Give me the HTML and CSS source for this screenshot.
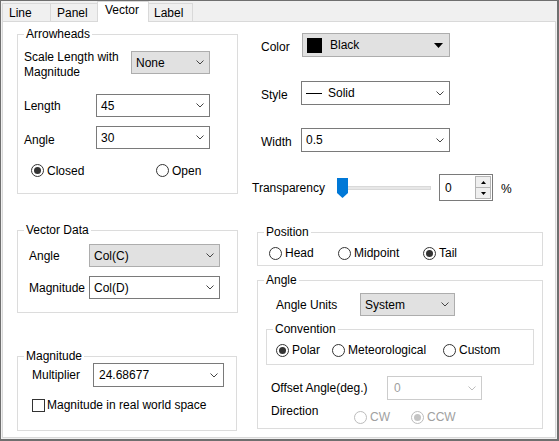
FILE: index.html
```html
<!DOCTYPE html>
<html>
<head>
<meta charset="utf-8">
<link rel="stylesheet" href="styles.css">
</head>
<body>
<div class="window">
  <div class="tabs">
    <div class="tab t-line">Line</div>
    <div class="tab t-panel">Panel</div>
    <div class="tab t-vector active">Vector</div>
    <div class="tab t-label">Label</div>
  </div>
  <div class="panel">
    <div class="col-left">
      <div class="group g-arrow">
        <div class="gtitle">Arrowheads</div>
        <div class="row r-scale">
          <div class="lbl lbl-scale">Scale Length with<br>Magnitude</div>
          <div class="select gray s-none"><span class="val">None</span><svg class="chev" width="8" height="5" viewBox="0 0 8 5"><path d="M0.5 0.5 L4 4 L7.5 0.5" fill="none" stroke="#444" stroke-width="1"/></svg></div>
        </div>
        <div class="row r-len">
          <div class="lbl lbl-len">Length</div>
          <div class="select s-len"><span class="val">45</span><svg class="chev" width="8" height="5" viewBox="0 0 8 5"><path d="M0.5 0.5 L4 4 L7.5 0.5" fill="none" stroke="#444" stroke-width="1"/></svg></div>
        </div>
        <div class="row r-ang">
          <div class="lbl lbl-len lbl-low">Angle</div>
          <div class="select s-len"><span class="val">30</span><svg class="chev" width="8" height="5" viewBox="0 0 8 5"><path d="M0.5 0.5 L4 4 L7.5 0.5" fill="none" stroke="#444" stroke-width="1"/></svg></div>
        </div>
        <div class="row r-radio-arrow">
          <div class="radio w-closed"><span class="rc checked"></span>Closed</div>
          <div class="radio"><span class="rc"></span>Open</div>
        </div>
      </div>

      <div class="group g-vec">
        <div class="gtitle">Vector Data</div>
        <div class="row r-vec1">
          <div class="lbl lbl-vec">Angle</div>
          <div class="select gray s-vec"><span class="val">Col(C)</span><svg class="chev" width="8" height="5" viewBox="0 0 8 5"><path d="M0.5 0.5 L4 4 L7.5 0.5" fill="none" stroke="#444" stroke-width="1"/></svg></div>
        </div>
        <div class="row r-vec2">
          <div class="lbl lbl-vec">Magnitude</div>
          <div class="select s-vec"><span class="val">Col(D)</span><svg class="chev" width="8" height="5" viewBox="0 0 8 5"><path d="M0.5 0.5 L4 4 L7.5 0.5" fill="none" stroke="#444" stroke-width="1"/></svg></div>
        </div>
      </div>

      <div class="group g-mag">
        <div class="gtitle">Magnitude</div>
        <div class="row r-mult">
          <div class="lbl lbl-mult">Multiplier</div>
          <div class="select s-mult"><span class="val">24.68677</span><svg class="chev" width="8" height="5" viewBox="0 0 8 5"><path d="M0.5 0.5 L4 4 L7.5 0.5" fill="none" stroke="#444" stroke-width="1"/></svg></div>
        </div>
        <div class="row r-check">
          <span class="cb"></span>
          <span>Magnitude in real world space</span>
        </div>
      </div>
    </div>

    <div class="col-right">
      <div class="row r-color">
        <div class="lbl lbl-right lbl-low1">Color</div>
        <div class="select gray s-color">
          <span class="swatch"></span><span class="val">Black</span>
          <svg class="tri" width="9" height="5" viewBox="0 0 9 5"><path d="M0 0 H9 L4.5 5 Z" fill="#000"/></svg>
        </div>
      </div>
      <div class="row r-style">
        <div class="lbl lbl-right2 lbl-low1">Style</div>
        <div class="select s-style">
          <span class="linesw"></span><span class="val">Solid</span>
          <svg class="chev" width="8" height="5" viewBox="0 0 8 5"><path d="M0.5 0.5 L4 4 L7.5 0.5" fill="none" stroke="#444" stroke-width="1"/></svg>
        </div>
      </div>
      <div class="row r-width">
        <div class="lbl lbl-right2 lbl-low1">Width</div>
        <div class="select s-style"><span class="val">0.5</span><svg class="chev" width="8" height="5" viewBox="0 0 8 5"><path d="M0.5 0.5 L4 4 L7.5 0.5" fill="none" stroke="#444" stroke-width="1"/></svg></div>
      </div>
      <div class="row r-trans">
        <div class="lbl lbl-trans">Transparency</div>
        <div class="slider">
          <div class="track"></div>
          <svg class="thumb" width="11" height="20" viewBox="0 0 11 20"><path d="M0 0 H11 V15 L5.5 20 L0 15 Z" fill="#0078d7"/></svg>
        </div>
        <div class="spin">
          <div class="spin-val">0</div>
          <div class="spin-btns">
            <div class="sb"><svg width="5" height="3" viewBox="0 0 5 3"><path d="M0 3 L2.5 0 L5 3 Z" fill="#000"/></svg></div>
            <div class="sb"><svg width="5" height="3" viewBox="0 0 5 3"><path d="M0 0 L2.5 3 L5 0 Z" fill="#000"/></svg></div>
          </div>
        </div>
        <div class="pct">%</div>
      </div>

      <div class="group g-pos">
        <div class="gtitle">Position</div>
        <div class="row r-pos">
          <div class="radio w-head"><span class="rc"></span>Head</div>
          <div class="radio w-mid"><span class="rc"></span>Midpoint</div>
          <div class="radio"><span class="rc checked"></span>Tail</div>
        </div>
      </div>

      <div class="group g-angle">
        <div class="gtitle">Angle</div>
        <div class="row r-units">
          <div class="lbl lbl-units">Angle Units</div>
          <div class="select gray s-units"><span class="val">System</span><svg class="chev" width="8" height="5" viewBox="0 0 8 5"><path d="M0.5 0.5 L4 4 L7.5 0.5" fill="none" stroke="#444" stroke-width="1"/></svg></div>
        </div>
        <div class="group g-conv">
          <div class="gtitle">Convention</div>
          <div class="row r-conv">
            <div class="radio w-polar"><span class="rc checked"></span>Polar</div>
            <div class="radio w-met"><span class="rc"></span>Meteorological</div>
            <div class="radio"><span class="rc"></span>Custom</div>
          </div>
        </div>
        <div class="row r-offset">
          <div class="lbl lbl-offset">Offset Angle(deg.)</div>
          <div class="select disabled s-units"><span class="val">0</span><svg class="chev" width="8" height="5" viewBox="0 0 8 5"><path d="M0.5 0.5 L4 4 L7.5 0.5" fill="none" stroke="#bdbdbd" stroke-width="1"/></svg></div>
        </div>
        <div class="row r-dir">
          <div class="lbl lbl-dir">Direction</div>
          <div class="radio dis w-cw"><span class="rc"></span>CW</div>
          <div class="radio dis"><span class="rc checked"></span>CCW</div>
        </div>
      </div>
    </div>
  </div>
</div>
</body>
</html>
```

FILE: styles.css
```css
html, body {
  margin: 0;
  padding: 0;
}
body {
  font-family: "Liberation Sans", Arial, sans-serif;
  font-size: 12px;
  color: #000;
}
.window {
  width: 559px;
  height: 441px;
  box-sizing: border-box;
  border-style: solid;
  border-color: #6f6f6f;
  border-width: 1px 2px 2px 1px;
  background: #f0f0f0;
  overflow: hidden;
}

/* tabs */
.tabs {
  display: flex;
  align-items: flex-end;
  height: 20px;
  padding-left: 1px;
}
.tab {
  box-sizing: border-box;
  height: 18px;
  border: 1px solid #d9d9d9;
  border-bottom: none;
  background: #f0f0f0;
  padding-left: 6px;
  line-height: 18px;
  margin-left: -1px;
}
.t-line { width: 49px; margin-left: 0; }
.t-panel { width: 48px; }
.t-vector { width: 52px; }
.t-label { width: 45px; padding-left: 5px; }
.tab.active {
  height: 21px;
  margin-bottom: -1px;
  background: #fff;
  line-height: 16px;
  padding-left: 7px;
  position: relative;
  z-index: 1;
}

.panel {
  box-sizing: border-box;
  margin-left: 1px;
  width: 554px;
  height: 417px;
  border: 1px solid #d9d9d9;
  background: #fff;
  display: flex;
  align-items: flex-start;
}

.col-left {
  margin-left: 14px;
  width: 221px;
  display: flex;
  flex-direction: column;
}
.col-right {
  margin-left: 14px;
  width: 291px;
  display: flex;
  flex-direction: column;
}

/* groups */
.group {
  box-sizing: border-box;
  border: 1px solid #dcdcdc;
}
.gtitle {
  margin-top: -9px;
  margin-left: 6px;
  height: 16px;
  line-height: 16px;
  padding: 0 2px;
  background: #fff;
  width: fit-content;
}

.row {
  display: flex;
  align-items: center;
}
.lbl { box-sizing: border-box; flex: none; }

/* selects */
.select {
  box-sizing: border-box;
  height: 23px;
  border: 1px solid #7a7a7a;
  background: #fff;
  display: flex;
  align-items: center;
  padding-left: 4px;
  padding-right: 5px;
  flex: none;
}
.select .val { flex: 1; }
.select.gray {
  background: #e1e1e1;
  border-color: #adadad;
}
.select.disabled {
  border-color: #cccccc;
  color: #a0a0a0;
  padding-left: 6px;
}
.chev { flex: none; }

/* radio & check */
.radio {
  display: flex;
  align-items: center;
  flex: none;
}
.rc {
  box-sizing: border-box;
  width: 13px;
  height: 13px;
  border: 1px solid #333;
  border-radius: 50%;
  margin-right: 3px;
  display: flex;
  align-items: center;
  justify-content: center;
  flex: none;
}
.rc.checked::after {
  content: "";
  width: 7px;
  height: 7px;
  border-radius: 50%;
  background: #333;
}
.radio.dis { color: #a0a0a0; }
.radio.dis .rc { border-color: #bcbcbc; }
.radio.dis .rc.checked::after { background: #c4c4c4; }
.cb {
  box-sizing: border-box;
  width: 13px;
  height: 13px;
  border: 1px solid #333;
  margin-right: 2px;
  flex: none;
}

/* Arrowheads */
.g-arrow { margin-top: 12px; height: 160px; }
.r-scale { margin-top: 9px; align-items: flex-start; height: 23px; }
.lbl-scale { width: 113px; padding-left: 6px; line-height: 15px; margin-top: -1px; }
.s-none { width: 79px; }
.r-len { margin-top: 20px; }
.r-ang { margin-top: 9px; }
.lbl-len { width: 78px; padding-left: 6px; }
.lbl-low { padding-top: 4px; }
.s-len { width: 114px; }
.r-radio-arrow { margin-top: 15px; padding-left: 13px; height: 13px; }
.w-closed { width: 125px; }

/* Vector data */
.g-vec { margin-top: 36px; height: 83px; }
.r-vec1 { margin-top: 6px; }
.r-vec2 { margin-top: 9px; }
.lbl-vec { width: 71px; padding-left: 11px; }
.s-vec { width: 131px; }

/* Magnitude */
.g-mag { margin-top: 43px; height: 75px; width: 220px; }
.r-mult { margin-top: -1px; }
.lbl-mult { width: 75px; padding-left: 14px; }
.s-mult { width: 131px; height: 24px; padding-left: 5px; }
.r-check { margin-top: 11px; padding-left: 14px; }

/* Right column */
.r-color { margin-top: 11px; }
.lbl-right { width: 50px; padding-left: 9px; }
.lbl-right2 { width: 49px; padding-left: 9px; }
.lbl-low1 { padding-top: 3px; }
.s-color { width: 148px; height: 24px; padding-right: 6px; }
.swatch {
  width: 15px;
  height: 15px;
  background: #000;
  flex: none;
  margin-right: 8px;
}
.tri { flex: none; }
.r-style { margin-top: 24px; }
.r-width { margin-top: 23px; }
.s-style { width: 149px; height: 24px; }
.linesw {
  width: 16px;
  height: 1px;
  background: #000;
  flex: none;
  margin-right: 6px;
}
.r-trans { margin-top: 22px; height: 27px; }
.lbl-trans { width: 85px; padding-top: 1px; }
.slider {
  width: 102px;
  height: 27px;
  display: flex;
  align-items: center;
  flex: none;
}
.track {
  margin-left: 3px;
  width: 91px;
  height: 4px;
  box-sizing: border-box;
  background: #e7e7e7;
  border: 1px solid #d9d9d9;
  flex: none;
}
.thumb {
  margin-left: -94px;
  flex: none;
  position: relative;
}
.spin {
  box-sizing: border-box;
  width: 54px;
  height: 27px;
  border: 1px solid #7a7a7a;
  display: flex;
  flex: none;
}
.spin-val {
  flex: 1;
  padding-left: 5px;
  display: flex;
  align-items: center;
}
.spin-btns {
  width: 17px;
  box-sizing: border-box;
  padding: 1px 1px 1px 0;
  display: flex;
  flex-direction: column;
}
.sb {
  flex: 1;
  box-sizing: border-box;
  border: 1px solid #b4b4b4;
  background: #efefef;
  display: flex;
  align-items: center;
  justify-content: center;
}
.sb + .sb { border-top: none; }
.pct { margin-left: 8px; padding-top: 3px; }

/* Position */
.g-pos { margin-top: 31px; margin-left: 5px; width: 286px; height: 34px; }
.r-pos { margin-top: 6px; padding-left: 11px; }
.w-head { width: 69px; }
.w-mid { width: 85px; }

/* Angle */
.g-angle { margin-top: 14px; margin-left: 5px; width: 286px; height: 149px; }
.r-units { margin-top: 5px; padding-left: 18px; }
.lbl-units { width: 84px; }
.s-units { width: 95px; }
.g-conv { margin-top: 13px; margin-left: 8px; width: 268px; height: 36px; }
.r-conv { margin-top: 6px; padding-left: 9px; }
.w-polar { width: 56px; }
.w-met { width: 111px; }
.r-offset { margin-top: 11px; padding-left: 13px; }
.r-offset .select { height: 24px; }
.lbl-offset { width: 116px; }
.r-dir { margin-top: 10px; padding-left: 13px; align-items: flex-start; height: 13px; }
.lbl-dir { width: 83px; margin-top: -6px; line-height: 14px; }
.w-cw { width: 57px; }
```
